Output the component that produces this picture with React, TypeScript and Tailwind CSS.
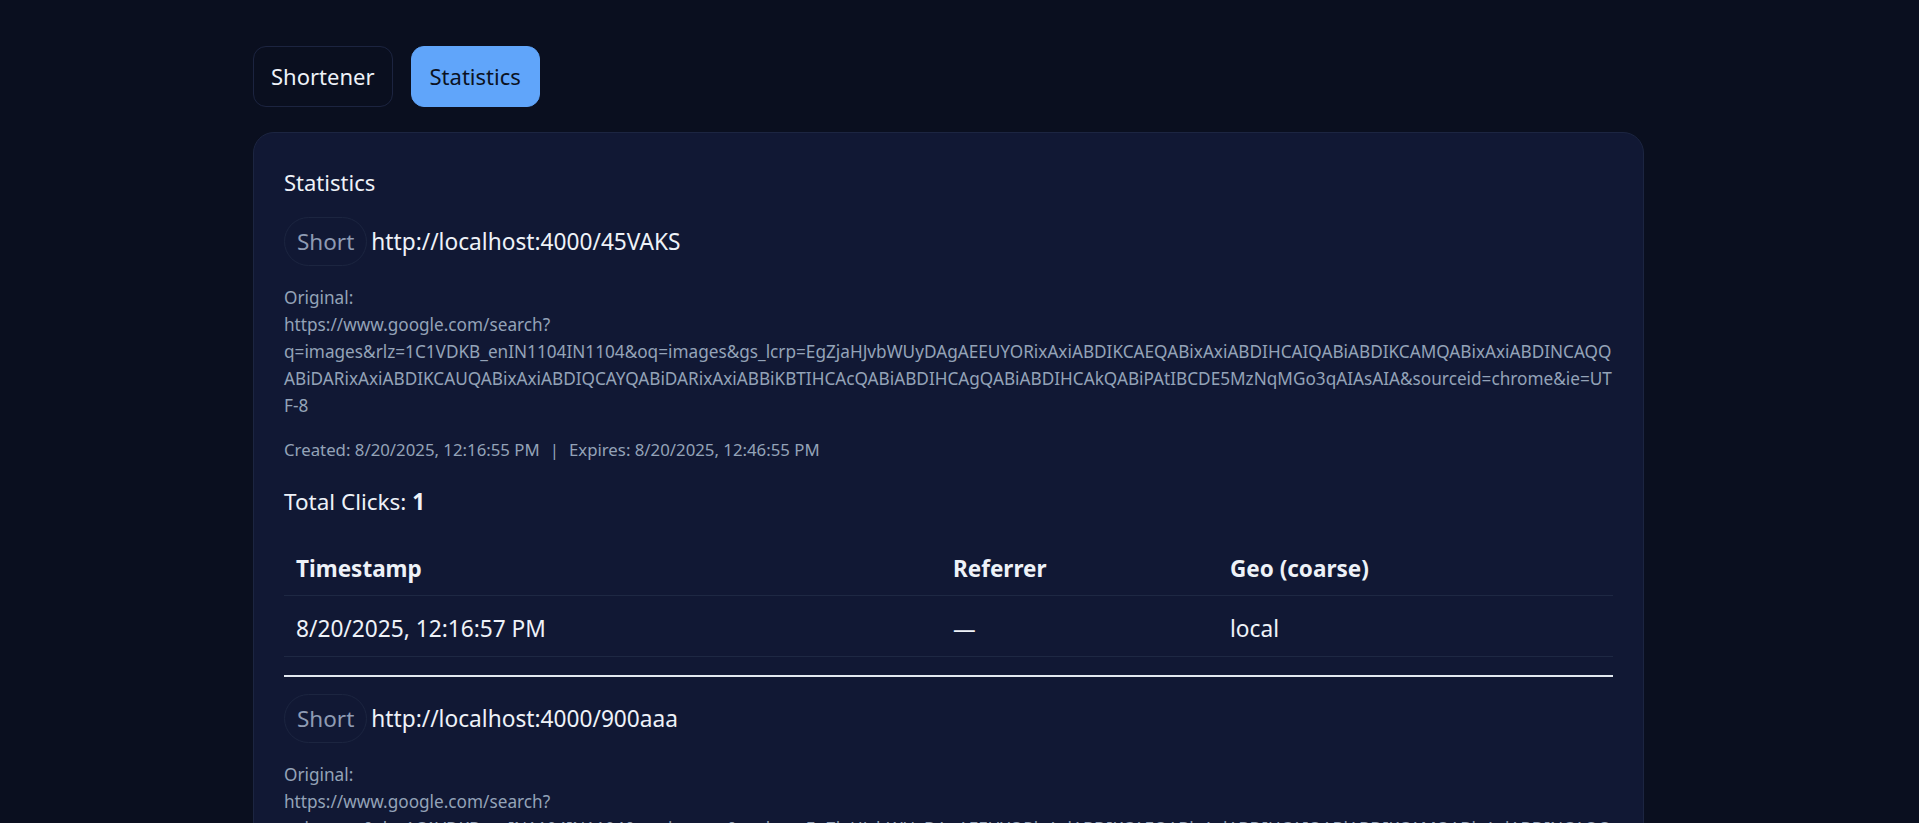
// App.tsx — link shortener statistics view
const FONT = { fontFamily: '"Noto Sans", "Open Sans", sans-serif' };

type Click = { ts: string; referrer: string; geo: string };
type Entry = {
  short: string;
  original: string[];
  created: string;
  expires: string;
  clicks: Click[];
};

const googleLines = [
  "https://www.google.com/search?",
  "q=images&rlz=1C1VDKB_enIN1104IN1104&oq=images&gs_lcrp=EgZjaHJvbWUyDAgAEEUYORixAxiABDIKCAEQABixAxiABDIHCAIQABiABDIKCAMQABixAxiABDINCAQQ",
  "ABiDARixAxiABDIKCAUQABixAxiABDIQCAYQABiDARixAxiABBiKBTIHCAcQABiABDIHCAgQABiABDIHCAkQABiPAtIBCDE5MzNqMGo3qAIAsAIA&sourceid=chrome&ie=UT",
  "F-8",
];

const entries: Entry[] = [
  {
    short: "http://localhost:4000/45VAKS",
    original: googleLines,
    created: "8/20/2025, 12:16:55 PM",
    expires: "8/20/2025, 12:46:55 PM",
    clicks: [{ ts: "8/20/2025, 12:16:57 PM", referrer: "—", geo: "local" }],
  },
  {
    short: "http://localhost:4000/900aaa",
    original: googleLines,
    created: "8/20/2025, 12:15:31 PM",
    expires: "8/20/2025, 12:45:31 PM",
    clicks: [{ ts: "8/20/2025, 12:15:40 PM", referrer: "—", geo: "local" }],
  },
];

function EntryBlock({ e }: { e: Entry }) {
  return (
    <div>
      {/* Short link */}
      <div className="flex items-center gap-[4px]">
        <span className="flex h-[49px] items-center rounded-full border border-[#1c2540] px-[12px] text-[22.5px] leading-[30px] text-[#8e9bb3]">
          Short
        </span>
        <span className="text-[22.7px] leading-[30px] text-[#eef2f8]">{e.short}</span>
      </div>

      {/* Original */}
      <div className="mt-[18px] text-[17.2px] leading-[27px] text-[#94a3b8]">
        <div>Original:</div>
        {e.original.map((l, i) => (
          <div key={i} className="whitespace-nowrap">
            {l}
          </div>
        ))}
      </div>

      <div className="mt-[19px] text-[16.8px] leading-[24px] text-[#94a3b8]">
        Created: {e.created}
        <span className="px-[10px]">|</span>
        Expires: {e.expires}
      </div>

      <div className="mt-[25px] text-[22.5px] leading-[30px] text-[#eef2f8]">
        Total Clicks: <b className="font-bold">{e.clicks.length}</b>
      </div>

      {/* Clicks table */}
      <div className="mt-[25px] text-[#eef2f8]">
        <div className="grid h-[54px] grid-cols-[657px_277px_1fr] items-center border-b border-[#1e2843] text-[22.5px] font-bold">
          <div className="pl-[12px]">Timestamp</div>
          <div className="pl-[12px]">Referrer</div>
          <div className="pl-[12px]">Geo (coarse)</div>
        </div>
        {e.clicks.map((c) => (
          <div
            key={c.ts}
            className="grid h-[61px] grid-cols-[657px_277px_1fr] items-center border-b border-[#1e2843] pt-[6px] text-[22.7px]"
          >
            <div className="pl-[12px]">{c.ts}</div>
            <div className="pl-[12px]">{c.referrer}</div>
            <div className="pl-[12px]">{c.geo}</div>
          </div>
        ))}
      </div>
    </div>
  );
}

export default function App() {
  return (
    <div className="min-h-screen bg-[#0a0f1f] pb-[60px] pt-[46px]" style={FONT}>
      <div className="ml-[253px] w-[1391px]">
        {/* Tabs */}
        <div className="flex gap-[18px]">
          <button className="h-[61px] rounded-[13px] border border-[#1c2440] px-[17px] text-[22px] text-[#eef2f8]">
            Shortener
          </button>
          <button className="h-[61px] rounded-[13px] border border-[#60a5fa] bg-[#60a5fa] px-[18px] text-[22px] text-[#0b1222]">
            Statistics
          </button>
        </div>

        {/* Card */}
        <div className="mt-[25px] rounded-[21px] border border-[#1c2541] bg-[#111834] px-[30px] pb-[40px] pt-[34px]">
          <h2 className="text-[22px] leading-[30px] text-[#eef2f8]">Statistics</h2>
          <div className="mt-[20px]">
            {entries.map((e, i) => (
              <div key={e.short}>
                {i > 0 && <div className="mb-[17px] mt-[18px] h-[2px] bg-[#e2e8f0]" />}
                <EntryBlock e={e} />
              </div>
            ))}
          </div>
        </div>
      </div>
    </div>
  );
}
